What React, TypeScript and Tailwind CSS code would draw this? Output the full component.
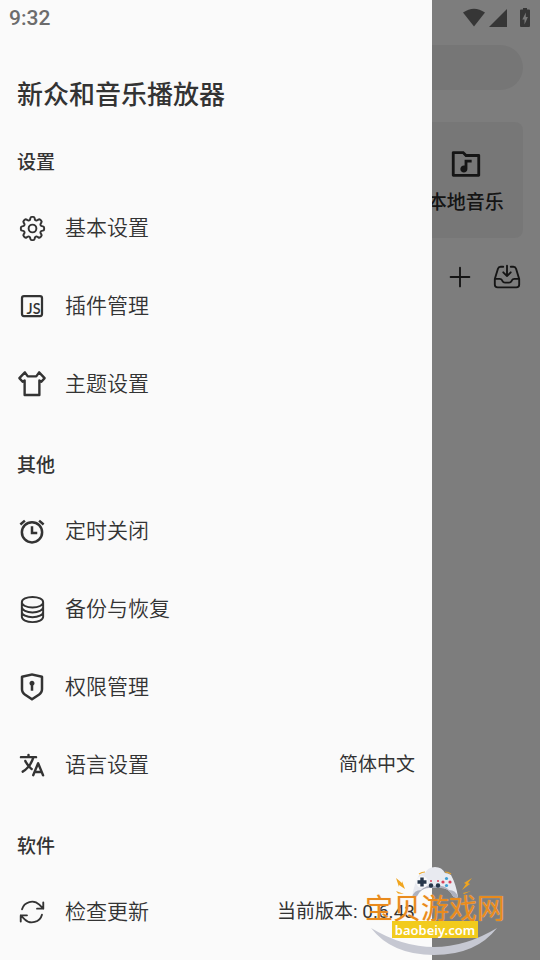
import React from 'react';
import {
  HiOutlineCog8Tooth,
  HiOutlineCircleStack,
  HiOutlineArrowPath,
  HiOutlineInboxArrowDown,
  HiOutlinePlus,
} from 'react-icons/hi2';
import { RiShieldKeyholeLine, RiFolderMusicLine } from 'react-icons/ri';
import { IoLanguage } from 'react-icons/io5';

type IconProps = { className?: string };

interface DrawerItem {
  title: string;
  icon: React.ComponentType<IconProps>;
  iconSize: string;
  value?: string;
}

interface DrawerSection {
  title: string;
  items: DrawerItem[];
}

function JsIcon({ className }: IconProps) {
  return (
    <svg viewBox="0 0 24 24" className={className} fill="none">
      <rect x="4" y="4" width="16" height="16" rx="1.6" stroke="currentColor" strokeWidth="1.8" />
      <text
        x="18.8"
        y="18"
        textAnchor="end"
        fontSize="11.5"
        fontWeight="600"
        fontFamily="Lato, sans-serif"
        fill="currentColor"
      >
        JS
      </text>
    </svg>
  );
}

function ShirtIcon({ className }: IconProps) {
  return (
    <svg viewBox="0 0 24 24" className={className} fill="none" stroke="currentColor" strokeWidth="1.9" strokeLinejoin="round">
      <path d="M6.3 2.7 1.9 7.3l2.6 2.9 1.6-1v11.6h11.8V9.200l1.6 1 2.6-2.9-4.4-4.6-2.300 3.200H8.6z" />
    </svg>
  );
}

function AlarmIcon({ className }: IconProps) {
  return (
    <svg viewBox="0 0 24 24" className={className} fill="none" stroke="currentColor" strokeWidth="2">
      <circle cx="12" cy="13" r="8.1" />
      <path d="M12 8.2v5.4h4.2" />
      <path d="M2.7 6.8 6.3 3.7M21.3 6.8l-3.6-3.1" />
    </svg>
  );
}

const sections: DrawerSection[] = [
  {
    title: '设置',
    items: [
      { title: '基本设置', icon: HiOutlineCog8Tooth, iconSize: 'size-[31px]' },
      { title: '插件管理', icon: JsIcon, iconSize: 'size-[30px]' },
      { title: '主题设置', icon: ShirtIcon, iconSize: 'size-[30px]' },
    ],
  },
  {
    title: '其他',
    items: [
      { title: '定时关闭', icon: AlarmIcon, iconSize: 'size-[30px]' },
      { title: '备份与恢复', icon: HiOutlineCircleStack, iconSize: 'size-[31px]' },
      { title: '权限管理', icon: RiShieldKeyholeLine, iconSize: 'size-[30px]' },
      { title: '语言设置', icon: IoLanguage, iconSize: 'size-[28px]', value: '简体中文' },
    ],
  },
  {
    title: '软件',
    items: [
      { title: '检查更新', icon: HiOutlineArrowPath, iconSize: 'size-[30px]', value: '当前版本: 0.6.43' },
    ],
  },
];

function StatusIcons() {
  return (
    <div className="flex h-9 items-center justify-end pr-2 text-[#6c6c6c]">
      <svg viewBox="0 0 70 20" className="h-5 w-[70px]" fill="currentColor">
        <path d="M1 4.6Q12 -3 23 4.6L12 18.4z" />
        <path d="M45 1v18H27z" />
        <path d="M59 1.6h2V0h4v1.6h2q1 0 1 1v15.4q0 1-1 1h-8q-1 0-1-1V2.6q0-1 1-1z" />
        <path d="M63.8 4.5 60.3 11.5h2.2v5l3.4-7.4h-2.1z" fill="#f0f0f0" />
      </svg>
    </div>
  );
}

function HomePage() {
  return (
    <main className="col-start-1 row-start-1 bg-[#fafafa] text-[#2a2a2a]">
      <StatusIcons />
      <div className="mx-[17px] mt-[9px] h-[45px] rounded-full bg-[#ececec]" />
      <div className="mx-[17px] mt-8 grid grid-cols-4 gap-4">
        <button className="col-start-4 flex h-[116px] flex-col items-center justify-center gap-2 rounded-lg bg-[#efefef] pt-1">
          <RiFolderMusicLine className="size-[34px]" />
          <span className="text-[19px] leading-7 font-medium whitespace-nowrap">本地音乐</span>
        </button>
      </div>
      <div className="mx-[18px] mt-6 flex justify-end gap-[17px]">
        <button aria-label="新建歌单">
          <HiOutlinePlus className="size-[30px]" />
        </button>
        <button aria-label="导入歌单">
          <HiOutlineInboxArrowDown className="size-[30px]" />
        </button>
      </div>
    </main>
  );
}

function Drawer() {
  return (
    <aside className="z-10 col-start-1 row-start-1 w-4/5 bg-[#fafafa] text-[#333]">
      <div className="flex h-9 items-center pt-0.5 pl-[9px] font-[Roboto] text-[21px] font-medium text-[#6c6c6c]">9:32</div>
      <h1 className="mt-[30px] flex h-[54px] items-center px-[17px] pt-1 text-[26px] font-medium">新众和音乐播放器</h1>
      {sections.map((section) => (
        <section key={section.title} className="mt-[15px]">
          <h2 className="flex h-[54px] items-center px-[17px] pt-0.5 text-[19px] font-medium">{section.title}</h2>
          {section.items.map((item) => {
            const Icon = item.icon;
            return (
              <button key={item.title} className="flex h-[78px] w-full items-center gap-[18px] px-[17px] text-left">
                <span className="flex w-[30px] justify-center">
                  <Icon className={`shrink-0 ${item.iconSize}`} />
                </span>
                <span className="flex-1 pt-0.5 text-[21px] font-[350]">{item.title}</span>
                {item.value && <span className="text-[19px]">{item.value}</span>}
              </button>
            );
          })}
        </section>
      ))}
    </aside>
  );
}

function Watermark() {
  return (
    <div className="absolute right-[34px] bottom-0 z-20 flex h-[96px] w-[142px] flex-col items-center">
      <svg viewBox="0 0 142 96" className="absolute inset-0">
        {/* smile */}
        <path d="M7 64Q70 102 133 64Q112 91 70 91Q28 91 7 64z" fill="#c6c8d2" />
        {/* gamepad */}
        <path d="M55 11Q58 9 61 9Q64 3 71 3Q78 3 81 9Q84 9 87 11Q92 20 94 33Q90 35 87 29Q83 24 77 24H65Q59 24 55 29Q52 35 48 33Q50 20 55 11z" fill="#e8eaf0" />
        <path d="M48 33Q50 26 57 26Q61 22 65 22H77Q81 22 85 26Q92 26 94 33Q90 35 87 29Q83 24 77 24H65Q59 24 55 29Q52 35 48 33z" fill="#adb1be" />
        <path d="M55 10Q58 8 61 8M81 8Q84 8 87 10" stroke="#eba82f" strokeWidth="1.2" fill="none" />
        <circle cx="58" cy="18" r="6" fill="#f7f8fa" />
        <path d="M58 13.5v9M53.5 18h9" stroke="#26364a" strokeWidth="3.4" />
        <g fill="#26364a">
          <circle cx="67" cy="21.5" r="2.2" />
          <circle cx="74" cy="21.5" r="2.2" />
        </g>
        <g fill="#d9425a">
          <circle cx="67" cy="17" r="1" />
          <circle cx="74" cy="17" r="1" />
          <circle cx="79" cy="18" r="1.6" />
          <circle cx="86" cy="18" r="1.6" />
        </g>
        <g fill="#3c9fd4">
          <circle cx="82.5" cy="14.5" r="1.6" />
          <circle cx="82.5" cy="21.5" r="1.6" />
        </g>
        {/* sparks */}
        <g fill="#f0a51f">
          <path d="m32 14 6 5v-2l3 8-6-4v2z" />
          <path d="m108 14-8 5 2 1-4 6 8-6-2-1z" />
          <path d="m32 27 8 3-6-.5zM99 29l8-2-7 3z" />
        </g>
      </svg>
      <span className="relative mt-[28px] text-[28px] leading-9 whitespace-nowrap text-[#e98a1c] [text-shadow:0_0_1px_#ffd596]">
        宝贝游戏网
      </span>
      <span className="relative -mt-[7px] flex h-[17px] w-[86px] items-center justify-center bg-[#f2cb1d] font-['Noto_Sans'] text-[13px] leading-4 font-semibold text-white">
        baobeiy.com
      </span>
    </div>
  );
}

export default function App() {
  return (
    <div className="relative grid min-h-screen grid-cols-1 overflow-hidden font-[Roboto,'Noto_Sans_CJK_SC',sans-serif]">
      <HomePage />
      <div className="col-start-1 row-start-1 bg-black/50" />
      <Drawer />
      <Watermark />
    </div>
  );
}
